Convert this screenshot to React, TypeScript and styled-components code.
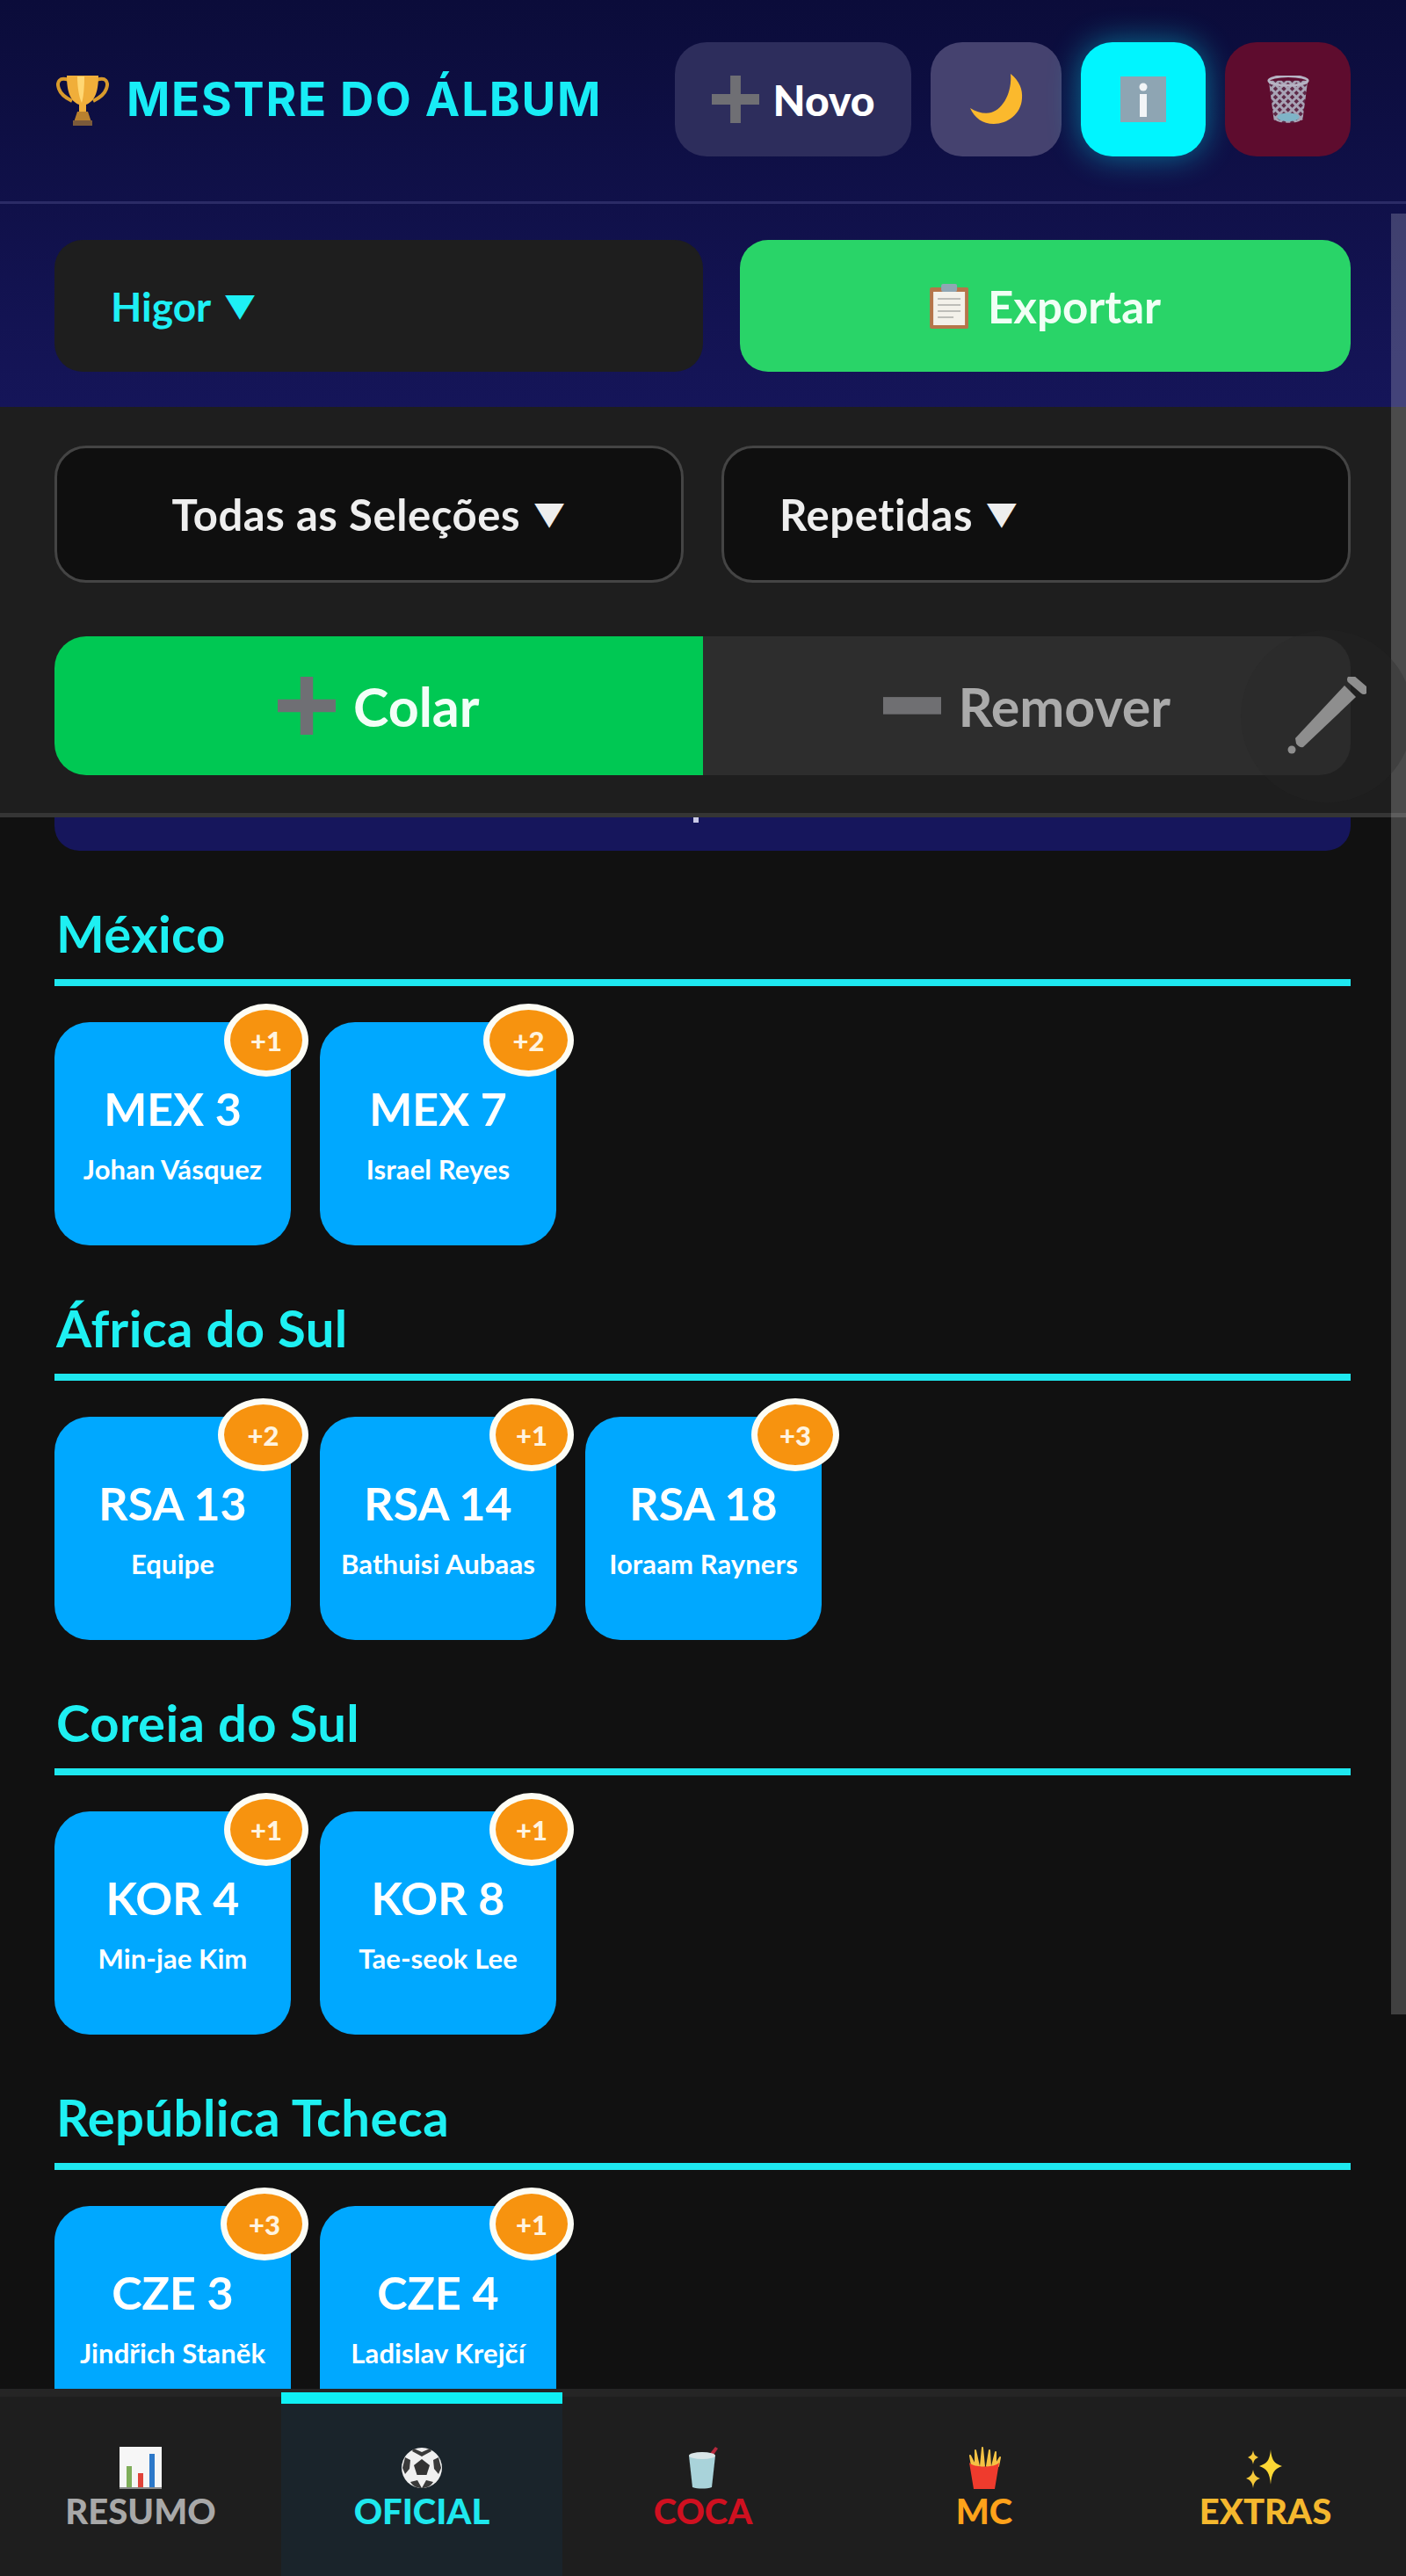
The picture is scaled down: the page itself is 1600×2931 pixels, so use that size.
import React from 'react';
import styled, { createGlobalStyle } from 'styled-components';

const GlobalStyle = createGlobalStyle`
  html, body {
    margin: 0;
    padding: 0;
    background: #111111;
    font-family: 'Lato', 'Inter', 'Noto Sans', sans-serif;
  }
  * { box-sizing: border-box; }
`;

const Page = styled.div`
  position: relative;
  width: 1600px;
  height: 2931px;
  display: flex;
  flex-direction: column;
  overflow: hidden;
  background: #111111;
`;

const Header = styled.header`
  flex: none;
  background: linear-gradient(180deg, #0b0c3a 0%, #151559 100%);
`;

const TopBar = styled.div`
  height: 232px;
  padding: 48px 63px 0 62px;
  display: flex;
  align-items: flex-start;
  justify-content: space-between;
  border-bottom: 3px solid #2b2b66;
`;

const Brand = styled.div`
  height: 130px;
  padding-left: 2px;
  display: flex;
  align-items: center;
  gap: 20px;
`;

const BrandName = styled.h1`
  margin: 0;
  font-family: 'Inter', sans-serif;
  font-size: 53px;
  font-weight: 700;
  letter-spacing: 1.7px;
  color: #18ecf6;
  white-space: nowrap;
`;

const ActionGroup = styled.div`
  display: flex;
  gap: 22px;
`;

const ActionButton = styled.button<{ $width: number; $bg: string; $glow?: boolean }>`
  width: ${(p) => p.$width}px;
  height: 130px;
  border: none;
  border-radius: 36px;
  padding: 0;
  display: flex;
  align-items: center;
  justify-content: center;
  gap: 16px;
  background: ${(p) => p.$bg};
  box-shadow: ${(p) => (p.$glow ? '0 0 36px rgba(0, 240, 255, 0.45)' : 'none')};
  color: #ffffff;
  font-family: inherit;
  font-size: 48px;
  font-weight: 900;
`;

const AccountRow = styled.div`
  padding: 41px 63px 40px 62px;
  display: flex;
  gap: 42px;
`;

const AccountSelect = styled.div`
  width: 738px;
  height: 150px;
  border-radius: 32px;
  background: #1e1e1e;
  padding-left: 64px;
  display: flex;
  align-items: center;
  color: #1ef0f5;
  font-size: 46px;
  font-weight: 700;
`;

const Caret = styled.span`
  margin-left: 14px;
  font-size: 36px;
`;

const ExportButton = styled.button`
  flex: 1;
  height: 150px;
  border: none;
  border-radius: 32px;
  background: #29d468;
  display: flex;
  align-items: center;
  justify-content: center;
  gap: 22px;
  color: #f0fff5;
  font-family: inherit;
  font-size: 51px;
  font-weight: 700;
`;

const FilterPanel = styled.section`
  flex: none;
  padding: 44px 63px 43px 62px;
  background: #1e1e1e;
  border-bottom: 5px solid #353535;
`;

const FilterRow = styled.div`
  display: grid;
  grid-template-columns: 1fr 1fr;
  gap: 43px;
  margin-bottom: 61px;
`;

const FilterSelect = styled.div<{ $centered?: boolean }>`
  height: 156px;
  border: 3px solid #444444;
  border-radius: 36px;
  background: #0f0f0f;
  padding-left: ${(p) => (p.$centered ? '0' : '63px')};
  display: flex;
  align-items: center;
  justify-content: ${(p) => (p.$centered ? 'center' : 'flex-start')};
  color: #eeeeee;
  font-size: 49px;
  letter-spacing: 0.6px;
  font-weight: 700;
`;

const ModeToggle = styled.div`
  display: flex;
  height: 158px;
  border-radius: 36px;
  overflow: hidden;
`;

const ModeOption = styled.div<{ $active?: boolean }>`
  flex: 1;
  display: flex;
  align-items: center;
  justify-content: center;
  gap: 20px;
  background: ${(p) => (p.$active ? '#00c853' : '#2d2d2d')};
  color: ${(p) => (p.$active ? '#f2fff7' : '#aaaaaa')};
  font-size: 61px;
  font-weight: 700;
`;

const Content = styled.main`
  flex: 1;
  min-height: 0;
  overflow: hidden;
  padding: 0 63px 0 62px;
`;

const Banner = styled.div`
  position: relative;
  height: 38px;
  margin-bottom: 52px;
  border-radius: 0 0 28px 28px;
  background: #16165c;
`;

const BannerDot = styled.span`
  position: absolute;
  left: 727px;
  top: 0;
  width: 6px;
  height: 6px;
  background: #c9c9e6;
`;

const Section = styled.section`
  margin-bottom: 52px;
`;

const SectionTitle = styled.h2`
  height: 102px;
  margin: 0 0 41px;
  padding: 9px 0 0 2px;
  border-bottom: 8px solid #1ee8f0;
  font-size: 58px;
  line-height: 66px;
  letter-spacing: 0.4px;
  font-weight: 700;
  color: #1ef0f2;
`;

const CardRow = styled.div`
  display: flex;
  gap: 33px;
`;

const Card = styled.div`
  position: relative;
  width: 269px;
  height: 254px;
  border-radius: 40px;
  background: #00a8ff;
  display: flex;
  flex-direction: column;
  align-items: center;
  padding-top: 67px;
  color: #ffffff;
`;

const CardCode = styled.div`
  font-size: 52px;
  line-height: 62px;
  font-weight: 700;
  white-space: nowrap;
`;

const CardName = styled.div`
  margin-top: 19px;
  font-size: 31px;
  line-height: 38px;
  letter-spacing: 0.1px;
  font-weight: 700;
  white-space: nowrap;
`;

const CountBadge = styled.span<{ $width: number }>`
  position: absolute;
  top: -21px;
  right: -20px;
  width: ${(p) => p.$width}px;
  height: 83px;
  border: 7px solid #fdfdf5;
  border-radius: 50%;
  background: #f7930f;
  display: flex;
  align-items: center;
  justify-content: center;
  color: #fff4e0;
  font-size: 31px;
  font-weight: 900;
`;

const BottomNav = styled.nav`
  flex: none;
  height: 213px;
  display: flex;
  background: #1e1e1e;
  border-top: 4px solid #252525;
`;

const NavTab = styled.div<{ $active?: boolean; $color: string }>`
  flex: 1;
  display: flex;
  flex-direction: column;
  align-items: center;
  background: ${(p) => (p.$active ? '#1a242b' : 'transparent')};
  border-top: ${(p) => (p.$active ? '13px solid #0ff0f5' : '5px solid #252525')};
  padding-top: ${(p) => (p.$active ? '49px' : '57px')};
  color: ${(p) => p.$color};
  font-size: 40px;
  line-height: 50px;
  font-weight: 900;
`;

const ScrollThumb = styled.div`
  position: absolute;
  top: 243px;
  right: 0;
  width: 17px;
  height: 2049px;
  background: rgba(255, 255, 255, 0.2);
`;

const EditFab = styled.button`
  position: absolute;
  left: 1412px;
  top: 717px;
  width: 196px;
  height: 196px;
  border: none;
  border-radius: 50%;
  background: rgba(40, 40, 40, 0.3);
  display: flex;
  align-items: center;
  justify-content: center;
  padding: 0;
`;

type IconProps = { size: number };

const PlusIcon = ({ size }: IconProps) => (
  <svg width={size} height={size} viewBox="0 0 64 64">
    <path d="M25 0h14v25h25v14H39v25H25V39H0V25h25z" fill="#6f6f74" />
  </svg>
);

const MinusIcon = ({ size }: IconProps) => (
  <svg width={size} height={size * 0.3} viewBox="0 0 64 19">
    <rect width="64" height="19" fill="#6f6f72" />
  </svg>
);

const TrophyIcon = ({ size }: IconProps) => (
  <svg width={size} height={size} viewBox="0 0 60 60">
    <path d="M14 8C4 4 0 10 3 18c2 6 9 11 15 14" fill="none" stroke="#d89a2c" strokeWidth="4" />
    <path d="M46 8c10-4 14 2 11 10-2 6-9 11-15 14" fill="none" stroke="#d89a2c" strokeWidth="4" />
    <path d="M12 3h36c0 16-3 29-14 33v8h-8v-8C15 32 12 19 12 3z" fill="#f0ae3a" />
    <path d="M24 4h8c0 12-1 24-3 30-3-6-5-18-5-30z" fill="#ffd773" />
    <path d="M24 44h12l4 12H20z" fill="#b9812f" />
    <rect x="19" y="54" width="22" height="6" fill="#7b5a3a" />
  </svg>
);

const MoonIcon = ({ size }: IconProps) => (
  <svg width={size} height={size} viewBox="0 0 60 58">
    <path d="M46 0C56 8 60 18 59 28 58 46 42 57 27 57 14 57 5 50 0 39 8 44 17 46 24 44 38 40 48 20 46 0z" fill="#fbb92d" />
  </svg>
);

const InfoIcon = ({ size }: IconProps) => (
  <svg width={size} height={size} viewBox="0 0 52 52">
    <rect width="52" height="52" fill="#8ea5b3" />
    <circle cx="26" cy="12" r="4.5" fill="#f2f5f7" />
    <rect x="22" y="20" width="8" height="26" fill="#f2f5f7" />
  </svg>
);

const TrashIcon = ({ size }: IconProps) => (
  <svg width={size} height={size} viewBox="0 0 50 56">
    <defs>
      <pattern id="trash-mesh" width="7" height="7" patternUnits="userSpaceOnUse" patternTransform="rotate(45)">
        <rect width="7" height="7" fill="#a8a3b5" />
        <rect x="2" y="2" width="4" height="4" fill="#5e2a48" />
      </pattern>
    </defs>
    <path d="M2 6h46l-6 46c-8 5-26 5-34 0z" fill="url(#trash-mesh)" />
    <ellipse cx="25" cy="6" rx="23" ry="5.5" fill="none" stroke="#b7b3c3" strokeWidth="3" />
    <ellipse cx="25" cy="49" rx="13" ry="5" fill="#7fb4c7" />
  </svg>
);

const ClipboardIcon = ({ size }: IconProps) => (
  <svg width={size * 0.85} height={size} viewBox="0 0 44 52">
    <rect y="5" width="44" height="47" rx="2" fill="#b5754a" />
    <rect x="4" y="10" width="36" height="38" fill="#f3f1ea" />
    <path d="M9 18h26M9 25h26M9 32h26M9 39h18" stroke="#bdbdb8" strokeWidth="2" />
    <rect x="13" y="1" width="18" height="9" rx="2" fill="#8fa7b4" />
  </svg>
);

const ChartIcon = ({ size }: IconProps) => (
  <svg width={size} height={size} viewBox="0 0 48 48">
    <rect width="48" height="48" fill="#f6f6f6" />
    <rect x="8" y="22" width="6" height="24" fill="#7fae5a" />
    <rect x="21" y="30" width="6" height="16" fill="#e0433a" />
    <rect x="34" y="8" width="6" height="38" fill="#2c78c9" />
    <rect y="46" width="48" height="2" fill="#8a8a8a" />
  </svg>
);

const BallIcon = ({ size }: IconProps) => (
  <svg width={size} height={size} viewBox="0 0 48 48">
    <circle cx="24" cy="24" r="23" fill="#f0f0f0" />
    <path d="M24 14l9 7-3.5 11h-11L15 21z" fill="#333333" />
    <path d="M15 2l9 4 9-4 2 3-11 6L13 5zM2 24l3-12 6 3-1 10-5 6zM46 24l-3-12-6 3 1 10 5 6zM11 40l8-2 5 9c-5 0-10-2-13-7zM37 40l-8-2-5 9c5 0 10-2 13-7z" fill="#3a3a3a" />
  </svg>
);

const CupIcon = ({ size }: IconProps) => (
  <svg width={size} height={size} viewBox="0 0 48 48">
    <path d="M30 10l8-10 3 2-7 10z" fill="#b5283c" />
    <path d="M8 10h30l-4 36c-6 2-16 2-22 0z" fill="#a9d3da" />
    <ellipse cx="23" cy="10" rx="15" ry="4" fill="#d9e6e8" />
  </svg>
);

const FriesIcon = ({ size }: IconProps) => (
  <svg width={size} height={size} viewBox="0 0 48 48">
    <path d="M8 10l6 12h-4zM14 4l4 18h-4zM22 1l2 21h-4zM30 4l-3 18h4zM37 6l-4 16h4zM42 12l-6 10h4z" fill="#f6c244" stroke="#f6c244" strokeWidth="2" strokeLinejoin="round" />
    <path d="M7 18c5 6 29 6 34 0l-5 30H12z" fill="#ef3b2d" />
  </svg>
);

const SparklesIcon = ({ size }: IconProps) => (
  <svg width={size} height={size} viewBox="0 0 48 48">
    <path d="M30 0c1 12 4 16 13 19-9 3-12 8-13 21-1-13-4-18-13-21 9-3 12-7 13-19z" fill="#fdd835" transform="translate(0 3)" />
    <path d="M10 4c1 5 2 6 6 8-4 2-5 3-6 8-1-5-2-6-6-8 4-2 5-3 6-8z" fill="#f6c93a" />
    <path d="M10 26c1 6 3 8 8 10-5 2-7 4-8 11-1-7-3-9-8-11 5-2 7-4 8-10z" fill="#f6c93a" />
  </svg>
);

const PencilIcon = ({ size }: IconProps) => (
  <svg width={size} height={size} viewBox="0 0 90 90">
    <path d="M73 3l14 12" stroke="#8e8e8e" strokeWidth="10" strokeLinecap="round" />
    <path d="M65 10l13 13-60 57c-3 1-6-1-8-4l-1-6z" fill="#8e8e8e" />
    <circle cx="5" cy="83" r="4.5" fill="#8e8e8e" />
  </svg>
);

type Sticker = { code: string; name: string; extra: number };

const teams: { title: string; stickers: Sticker[] }[] = [
  {
    title: 'México',
    stickers: [
      { code: 'MEX 3', name: 'Johan Vásquez', extra: 1 },
      { code: 'MEX 7', name: 'Israel Reyes', extra: 2 },
    ],
  },
  {
    title: 'África do Sul',
    stickers: [
      { code: 'RSA 13', name: 'Equipe', extra: 2 },
      { code: 'RSA 14', name: 'Bathuisi Aubaas', extra: 1 },
      { code: 'RSA 18', name: 'Ioraam Rayners', extra: 3 },
    ],
  },
  {
    title: 'Coreia do Sul',
    stickers: [
      { code: 'KOR 4', name: 'Min-jae Kim', extra: 1 },
      { code: 'KOR 8', name: 'Tae-seok Lee', extra: 1 },
    ],
  },
  {
    title: 'República Tcheca',
    stickers: [
      { code: 'CZE 3', name: 'Jindřich Staněk', extra: 3 },
      { code: 'CZE 4', name: 'Ladislav Krejčí', extra: 1 },
    ],
  },
];

const badgeWidths: Record<number, number> = { 1: 96, 2: 103, 3: 100 };

const tabs = [
  { label: 'RESUMO', color: '#a8a8a8', icon: <ChartIcon size={48} /> },
  { label: 'OFICIAL', color: '#1ee8ee', icon: <BallIcon size={48} />, active: true },
  { label: 'COCA', color: '#cf1020', icon: <CupIcon size={48} /> },
  { label: 'MC', color: '#ffa21a', icon: <FriesIcon size={48} /> },
  { label: 'EXTRAS', color: '#f5b82e', icon: <SparklesIcon size={48} /> },
];

export default function App() {
  return (
    <Page>
      <GlobalStyle />
      <Header>
        <TopBar>
          <Brand>
            <TrophyIcon size={60} />
            <BrandName>MESTRE DO ÁLBUM</BrandName>
          </Brand>
          <ActionGroup>
            <ActionButton $width={269} $bg="#2d2d5c">
              <PlusIcon size={54} />
              Novo
            </ActionButton>
            <ActionButton $width={149} $bg="#45426f">
              <MoonIcon size={60} />
            </ActionButton>
            <ActionButton $width={142} $bg="#00f5ff" $glow>
              <InfoIcon size={52} />
            </ActionButton>
            <ActionButton $width={143} $bg="#5e0c2e">
              <TrashIcon size={54} />
            </ActionButton>
          </ActionGroup>
        </TopBar>
        <AccountRow>
          <AccountSelect>
            Higor<Caret>▼</Caret>
          </AccountSelect>
          <ExportButton>
            <ClipboardIcon size={52} />
            Exportar
          </ExportButton>
        </AccountRow>
      </Header>
      <FilterPanel>
        <FilterRow>
          <FilterSelect $centered>
            Todas as Seleções<Caret>▼</Caret>
          </FilterSelect>
          <FilterSelect>
            Repetidas<Caret>▼</Caret>
          </FilterSelect>
        </FilterRow>
        <ModeToggle>
          <ModeOption $active>
            <PlusIcon size={66} />
            Colar
          </ModeOption>
          <ModeOption>
            <MinusIcon size={66} />
            Remover
          </ModeOption>
        </ModeToggle>
      </FilterPanel>
      <Content>
        <Banner>
          <BannerDot />
        </Banner>
        {teams.map((team) => (
          <Section key={team.title}>
            <SectionTitle>{team.title}</SectionTitle>
            <CardRow>
              {team.stickers.map((s) => (
                <Card key={s.code}>
                  <CardCode>{s.code}</CardCode>
                  <CardName>{s.name}</CardName>
                  <CountBadge $width={badgeWidths[s.extra]}>+{s.extra}</CountBadge>
                </Card>
              ))}
            </CardRow>
          </Section>
        ))}
      </Content>
      <BottomNav>
        {tabs.map((t) => (
          <NavTab key={t.label} $active={t.active} $color={t.color}>
            {t.icon}
            {t.label}
          </NavTab>
        ))}
      </BottomNav>
      <ScrollThumb />
      <EditFab>
        <PencilIcon size={90} />
      </EditFab>
    </Page>
  );
}
